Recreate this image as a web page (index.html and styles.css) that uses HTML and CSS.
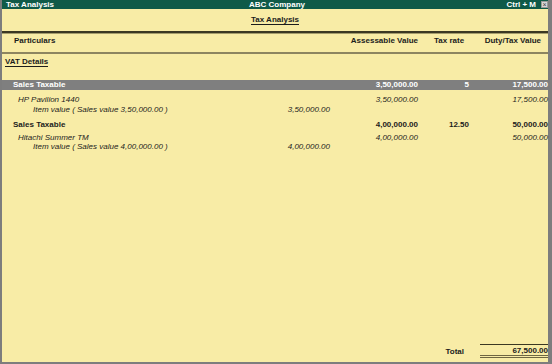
FILE: index.html
```html
<!DOCTYPE html>
<html lang="en">
<head>
    <meta charset="UTF-8">
    <title>Tax Analysis</title>
    <link rel="stylesheet" href="styles.css">
</head>
<body>
    <div class="janela">
        <div class="barra-titulo">
            <span class="barra-esq">Tax Analysis</span>
            <span class="barra-centro">ABC Company</span>
            <span class="barra-dir">Ctrl + M <span class="fechar">&#215;</span></span>
        </div>

        <div class="conteudo">
            <h1 class="titulo"><span>Tax Analysis</span></h1>

            <div class="cabecalho linha">
                <span class="col-part">Particulars</span>
                <span></span>
                <span class="num">Assessable Value</span>
                <span class="num col-taxa">Tax rate</span>
                <span class="num">Duty/Tax Value</span>
            </div>

            <div class="grupo"><span>VAT Details</span></div>

            <div class="linha destaque">
                <span class="col-part">Sales Taxable</span>
                <span></span>
                <span class="num">3,50,000.00</span>
                <span class="num">5</span>
                <span class="num">17,500.00</span>
            </div>
            <div class="linha item">
                <span class="col-item">HP Pavilion 1440</span>
                <span></span>
                <span class="num">3,50,000.00</span>
                <span></span>
                <span class="num">17,500.00</span>
            </div>
            <div class="linha item">
                <span class="col-sub">Item value ( Sales value 3,50,000.00 )</span>
                <span class="num">3,50,000.00</span>
                <span></span><span></span><span></span>
            </div>

            <div class="linha negrito">
                <span class="col-part">Sales Taxable</span>
                <span></span>
                <span class="num">4,00,000.00</span>
                <span class="num">12.50</span>
                <span class="num">50,000.00</span>
            </div>
            <div class="linha item item-2">
                <span class="col-item">Hitachi Summer TM</span>
                <span></span>
                <span class="num">4,00,000.00</span>
                <span></span>
                <span class="num">50,000.00</span>
            </div>
            <div class="linha item item-3">
                <span class="col-sub">Item value ( Sales value 4,00,000.00 )</span>
                <span class="num">4,00,000.00</span>
                <span></span><span></span><span></span>
            </div>

            <div class="espaco"></div>

            <div class="total">
                <span class="total-rotulo">Total</span>
                <span class="total-valor">67,500.00</span>
            </div>
        </div>
    </div>
</body>
</html>
```

FILE: styles.css
```css
* {
    box-sizing: border-box;
}

body {
    margin: 0;
    font-family: "Liberation Sans", Arial, sans-serif;
    font-size: 8px;
    color: #1c1c1c;
    background-color: #f8eca6;
}

.janela {
    width: 552px;
    height: 364px;
    display: flex;
    flex-direction: column;
    border-left: 2px solid #7d7d7d;
    border-right: 4px solid #7d7d7d;
    border-bottom: 2px solid #7d7d7d;
}

/* barra de titulo */
.barra-titulo {
    height: 9px;
    background-color: #0f5a48;
    color: #ffffff;
    font-weight: bold;
    line-height: 9px;
    display: flex;
    align-items: center;
    padding: 0 0 0 4px;
    position: relative;
}

.barra-esq {
    flex: 1;
}

.barra-centro {
    position: absolute;
    left: 247px;
    top: 0;
}

.barra-dir {
    display: flex;
    align-items: center;
    gap: 5px;
}

.fechar {
    width: 7px;
    height: 7px;
    background-color: #d8d8d8;
    border: 1px solid #9a9a9a;
    color: #3a3a3a;
    font-size: 7px;
    line-height: 5px;
    text-align: center;
    font-weight: normal;
}

.conteudo {
    flex: 1;
    display: flex;
    flex-direction: column;
}

.titulo {
    margin: 6px 0 0 0;
    font-size: 8px;
    font-weight: bold;
    text-align: center;
    line-height: 10px;
    height: 16px;
}

.titulo span {
    border-bottom: 1px solid #1c1c1c;
}

/* linhas da tabela */
.linha {
    display: grid;
    grid-template-columns: 1fr 82px 88px 51px 79px;
    line-height: 10px;
}

.num {
    text-align: right;
}

.cabecalho {
    font-weight: bold;
    border-top: 2px solid #3b3822;
    box-shadow: inset 0 1px 0 #a49c6c;
    border-bottom: 2px solid #8d8560;
    padding-top: 3px;
    height: 23px;
}

.cabecalho .col-part {
    padding-left: 12px;
}

.cabecalho .col-taxa {
    text-align: left;
    padding-left: 16px;
}

.cabecalho .num:last-child {
    padding-right: 7px;
}

.grupo {
    font-weight: bold;
    padding: 3px 0 0 3px;
    height: 26px;
    line-height: 10px;
}

.grupo span {
    border-bottom: 1px solid #1c1c1c;
}

.col-part {
    padding-left: 11px;
}

.destaque {
    background-color: #7f7f7f;
    color: #ffffff;
    font-weight: bold;
    height: 10px;
    margin-bottom: 5px;
}

.item {
    font-style: italic;
}

.col-item {
    padding-left: 16px;
}

.col-sub {
    padding-left: 31px;
}

.negrito {
    font-weight: bold;
    margin-top: 5px;
    margin-bottom: 3px;
}

.item-3 {
    margin-top: -1px;
}

.espaco {
    flex: 1;
}

/* total */
.total {
    display: flex;
    justify-content: flex-end;
    align-items: center;
    font-weight: bold;
    margin-bottom: 4px;
}

.total-rotulo {
    margin-right: 16px;
}

.total-valor {
    width: 68px;
    text-align: right;
    border-top: 1px solid #3b3822;
    border-bottom: 3px double #6e6642;
    line-height: 9px;
    padding: 1px 0 1px 0;
    height: 14px;
}
```
